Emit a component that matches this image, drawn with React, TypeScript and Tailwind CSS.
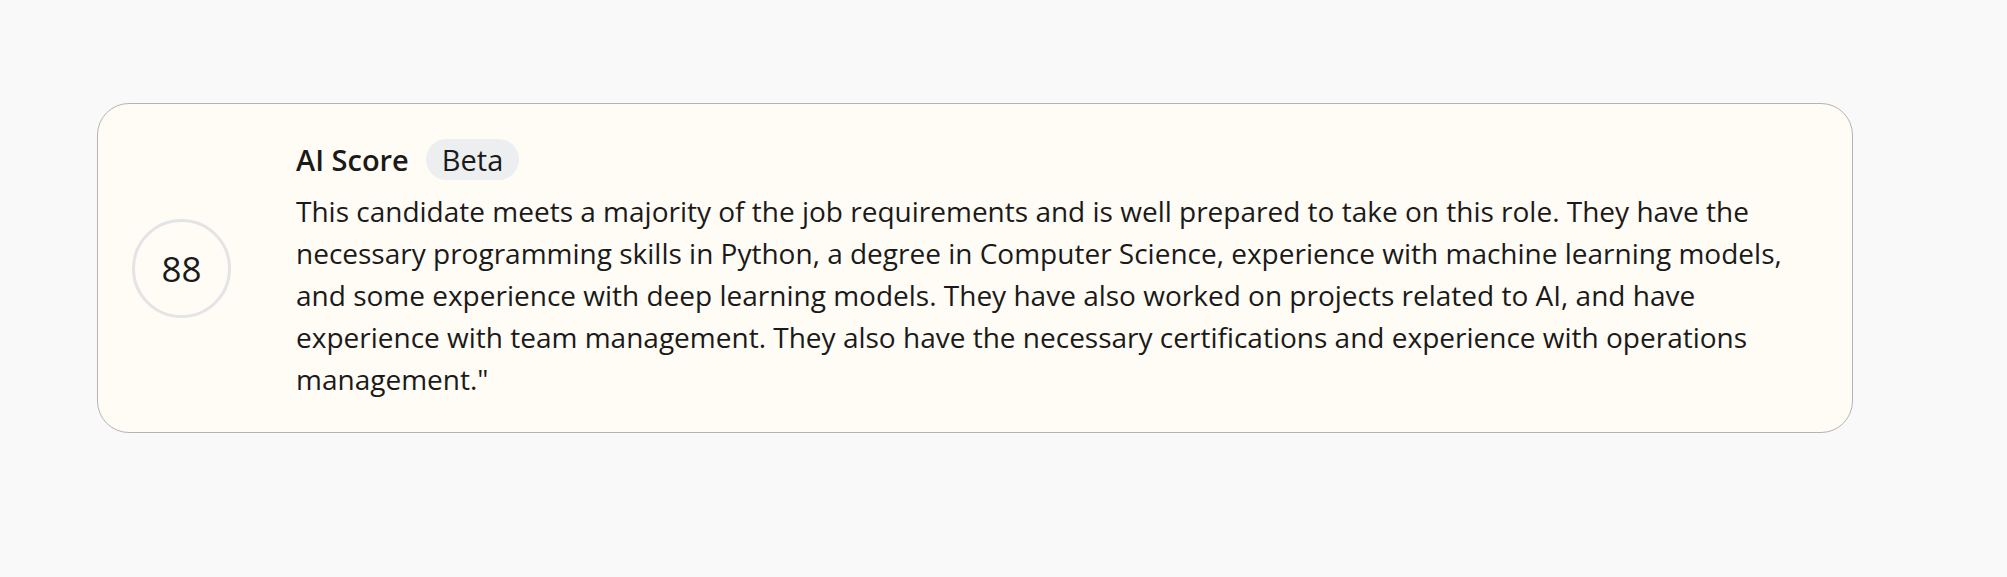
import React from 'react'

const summary =
  'This candidate meets a majority of the job requirements and is well prepared to take on this role. They have the necessary programming skills in Python, a degree in Computer Science, experience with machine learning models, and some experience with deep learning models. They have also worked on projects related to AI, and have experience with team management. They also have the necessary certifications and experience with operations management."'

const ScoreRing = ({ score }: { score: number }) => (
  <div className="w-[99px] h-[99px] shrink-0 rounded-full border-[3px] border-[#e3e4e6] flex items-center justify-center">
    <span className="text-[35px] text-[#1a1a1a] leading-none">{score}</span>
  </div>
)

export default function App() {
  return (
    <div className="min-h-screen w-full bg-[#f9f9f9] pt-[103px] pl-[97px] font-['Open_Sans',sans-serif]">
      <section className="w-[1756px] h-[330px] bg-[#fffcf5] border border-[#b4b4b4] rounded-[32px] flex items-center pl-[34px] pr-[48px]">
        <ScoreRing score={88} />

        {/* Summary block */}
        <div className="ml-[65px] flex flex-col pt-[2px]">
          <div className="flex items-center gap-[17px]">
            <h2 className="text-[29px] font-semibold text-[#1a1a1a]">AI Score</h2>
            <span className="h-[41px] px-[16px] rounded-full bg-[#eceef0] text-[29px] text-[#1a1a1a] flex items-center">
              Beta
            </span>
          </div>
          <p className="mt-[9px] text-[28px] leading-[42px] text-[#1a1a1a]">{summary}</p>
        </div>
      </section>
    </div>
  )
}
